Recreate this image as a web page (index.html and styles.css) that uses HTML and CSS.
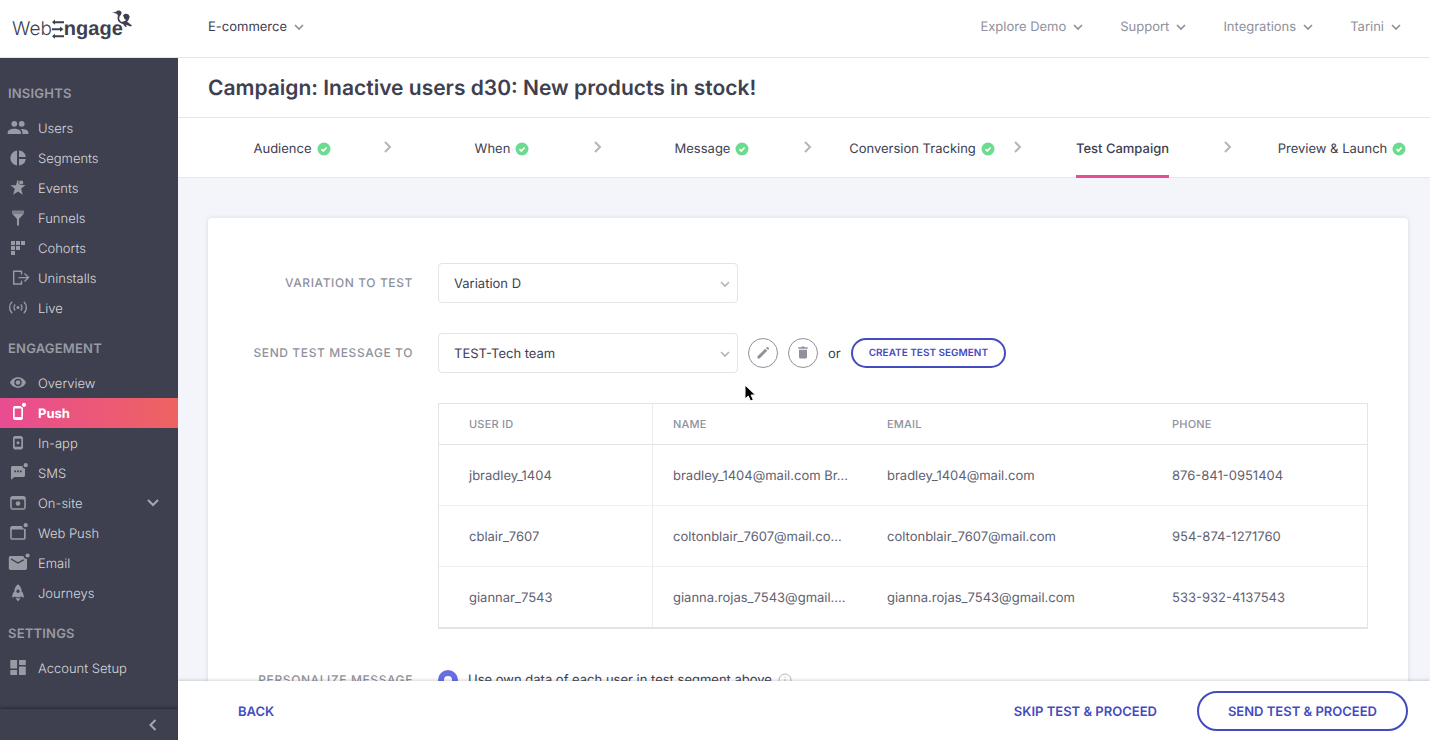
FILE: index.html
```html
<!DOCTYPE html>
<html lang="en">
<head>
<meta charset="utf-8">
<title>WebEngage – Test Campaign</title>
<meta name="viewport" content="width=device-width, initial-scale=1">
<link rel="stylesheet" href="styles.css">
</head>
<body>
<svg class="defs" aria-hidden="true">
  <symbol id="chev-down" viewBox="0 0 12 12"><path d="M2 4l4 4 4-4" fill="none" stroke="currentColor" stroke-width="1.7"/></symbol>
  <symbol id="chev-right" viewBox="0 0 12 14"><path d="M3 2l5 5-5 5" fill="none" stroke="currentColor" stroke-width="2"/></symbol>
  <symbol id="check" viewBox="0 0 14 14"><circle cx="7" cy="7" r="6.5" fill="#6bdc8f"/><path d="M4.500 7.200l1.800 1.800 3.300-3.500" fill="none" stroke="#fff" stroke-width="1.700"/></symbol>
</svg>
<div class="app">
  <header class="topbar">
    <a class="logo" href="#" aria-label="WebEngage">
      <span class="logo-light">Web</span>
      <svg class="logo-e" viewBox="0 0 12 20" fill="#3e404f" aria-hidden="true"><path d="M3 2.200h9v2H3v1.600L0 3.200 3 .6zM0 9.200h8V7.600l3.500 2.600L8 12.800v-1.600H0zM3 16.200h9v2H3v1.500l-3-2.500 3-2.500z"/></svg>
      <span class="logo-bold">ngage</span>
      <svg class="logo-bird" viewBox="0 0 20 18" fill="#3e404f" aria-hidden="true"><path d="M0 2.400L4.200 1.700C5.200 0 8.200-.1 9.300 1.900c.5 1 .2 1.900-.3 2.700l-1 .8-2 .3C5.600 4.200 4.500 3.100 0 2.400z"/><path d="M8.200 4.200C5.800 6.800 5.600 10 8.200 11.900c2 1.500 4 1.300 5.400-.2 1.800-1.500 3.400-3 3-5.700" fill="none" stroke="#3e404f" stroke-width="1.700"/><path d="M11 5.200c1-1.700 4-2.200 5.500-.6 1 1.300.9 2.700.2 3.900-1.200 1.600-3.300 1.500-4.200.6z"/><path d="M9.500 12l4.500-1.300 6 4.800-1.400 1-4.600-1.800.8 2.300-1.700-.3z"/></svg>
    </a>
    <nav class="topnav">
      <button class="menu menu-dark" type="button">E-commerce <svg class="i12"><use href="#chev-down"/></svg></button>
      <span class="grow"></span>
      <button class="menu" type="button">Explore Demo <svg class="i12"><use href="#chev-down"/></svg></button>
      <button class="menu" type="button">Support <svg class="i12"><use href="#chev-down"/></svg></button>
      <button class="menu" type="button">Integrations <svg class="i12"><use href="#chev-down"/></svg></button>
      <button class="menu" type="button">Tarini <svg class="i12"><use href="#chev-down"/></svg></button>
    </nav>
  </header>

  <aside class="sidebar">
    <nav class="side-scroll">
      <h2 class="side-title">Insights</h2>
      <a class="side-link" href="#"><svg class="ico" viewBox="0 0 22 18"><circle cx="7.300" cy="4.800" r="2.900"/><circle cx="14.700" cy="4.800" r="2.900"/><path d="M.7 15v-1.700c0-2.300 3.400-3.500 6.600-3.500s6.600 1.200 6.600 3.500V15zM15.400 15v-1.700c0-1.300-.7-2.400-1.800-3.300 3.200-.3 7.800.9 7.800 3.300V15z"/></svg>Users</a>
      <a class="side-link" href="#"><svg class="ico" viewBox="0 0 22 18"><path d="M10 1.500v14.900a7.500 7.500 0 0 1 0-14.900zM12 1.500a7.500 7.500 0 0 1 6.800 6.500H12zM12 10h6.800a7.500 7.500 0 0 1-6.800 6.400z"/></svg>Segments</a>
      <a class="side-link" href="#"><svg class="ico" viewBox="0 0 22 18"><path d="M9 6.200L10.300 1.300l1.200.3c-.7 3 .7 4.300 2.400 4.400h4.600l-4.400 3.800 1.700 5.900-4.800-3.300-4.800 3.300 1.600-5.900L3.500 6.200z"/><circle cx="14.200" cy="3.500" r="2.100"/></svg>Events</a>
      <a class="side-link" href="#"><svg class="ico" viewBox="0 0 22 18"><path opacity=".7" d="M5 1.500h12v3H5z"/><path d="M5 4.500h12l-5 5.500v6.500h-2V10z"/></svg>Funnels</a>
      <a class="side-link" href="#"><svg class="ico" viewBox="0 0 22 18"><path d="M4 2h4v4H4zM9 2h4v4H9zM14 2h4v4h-4zM4 7h4v4H4zM9 7h4v4H9zM4 12h4v4H4z"/></svg>Cohorts</a>
      <a class="side-link" href="#"><svg class="ico" viewBox="0 0 22 18"><path class="line" d="M14.500 5.500V2.200H6.700v12.800h7.800v-3.300M11.500 8.600H21M17.500 4.600l4 4-4 4"/></svg>Uninstalls</a>
      <a class="side-link" href="#"><svg class="ico" viewBox="0 0 22 18"><circle cx="11" cy="8.500" r="1.500"/><path class="line" d="M8.200 5.600a4.200 4.200 0 0 0 0 5.800M13.800 5.600a4.200 4.200 0 0 1 0 5.800M5.200 2.700C1.800 5.500 1.800 11.500 5.200 14.300M16.800 2.700c3.400 2.800 3.400 8.800 0 11.600"/></svg>Live</a>

      <h2 class="side-title">Engagement</h2>
      <a class="side-link" href="#"><svg class="ico" viewBox="0 0 22 18"><path fill-rule="evenodd" d="M11 3.200c4 0 6.800 2.500 8 5.300-1.200 2.800-4 5.300-8 5.300S4.200 11.300 3 8.500C4.200 5.700 7 3.200 11 3.200zm0 1.600a3.700 3.700 0 1 0 0 7.400 3.700 3.700 0 0 0 0-7.400z"/><circle cx="11" cy="8.500" r="2.300"/></svg>Overview</a>
      <a class="side-link active" href="#" aria-current="page"><svg class="ico" viewBox="0 0 22 18"><path fill-rule="evenodd" d="M7 2h6.500l2.500 1.800v10.700L14.800 16H7.200L6 14.500v-11zM7.700 4.500v8.500h6.600V4.500z"/><circle cx="17" cy=".8" r="2.100"/></svg>Push</a>
      <a class="side-link" href="#"><svg class="ico" viewBox="0 0 22 18"><path fill-rule="evenodd" d="M7.500 2h7l1.500 1.500v10.600l-1.500 1.400h-7L6 14.100V3.500zM7.700 4.700v8.100h6.600V4.700z"/><circle cx="11" cy="8.700" r="1.500"/></svg>In-app</a>
      <a class="side-link" href="#"><svg class="ico" viewBox="0 0 22 18"><path fill-rule="evenodd" d="M5 2h10.300a3 3 0 0 0 2.700 2.700v7.300l-1 1H7.500L4 15.800V3zM7.300 6.500v1.800h1.800V6.500zm2.800 0v1.800h1.800V6.500zm2.800 0v1.800h1.800V6.500z"/><circle cx="18.700" cy="1.200" r="2.100"/></svg>SMS</a>
      <a class="side-link" href="#"><svg class="ico" viewBox="0 0 22 18"><path fill-rule="evenodd" d="M5 2h12l1.800 1.600v10.500l-1.500 1.700H4.700l-1.500-1.700V3.600zM4.800 5.500v8.700h12.400V5.500z"/><circle cx="11" cy="9.500" r="2.300"/></svg>On-site<svg class="side-caret" viewBox="0 0 14 14"><path class="line2" d="M2 4l5 5 5-5"/></svg></a>
      <a class="side-link" href="#"><svg class="ico" viewBox="0 0 22 18"><path fill-rule="evenodd" d="M4.500 2H15a3 3 0 0 0 3.700 2.900v9.700l-1.200 1.200H4.500l-1.300-1.200v-11zM4.800 5.500v8.700H17V5.500z"/><circle cx="18.700" cy="1.200" r="2.100"/></svg>Web Push</a>
      <a class="side-link" href="#"><svg class="ico" viewBox="0 0 22 18"><path fill-rule="evenodd" d="M3 2h13.500c.2 1.700 1.500 3 3.500 2.900v9.900L18.700 16H3l-1.200-1.200V3.200zM4 4.300v1.400l7 4.100 6.300-3.600-1.100-1L11 8.200z"/><circle cx="20.600" cy="1.500" r="2.100"/></svg>Email</a>
      <a class="side-link" href="#"><svg class="ico" viewBox="0 0 22 18"><path fill-rule="evenodd" d="M11 .2c2.700 2 3.700 4.500 3.700 7.500 1.400 1 2.100 2.500 2.100 6l-2.800-1.200-1 .8H9l-1-.8-2.800 1.200c0-3.500.7-5 2.100-6 0-3 1-5.500 3.700-7.500zm0 5.300a1.700 1.700 0 1 0 0 3.400 1.700 1.700 0 0 0 0-3.400z"/><path d="M8.500 14.300h5L11 17.500z"/></svg>Journeys</a>

      <h2 class="side-title">Settings</h2>
      <a class="side-link" href="#"><svg class="ico" viewBox="0 0 22 18"><rect x="3.300" y="1" width="6.800" height="8.500" rx=".5"/><rect x="12" y="1" width="6.800" height="5" rx=".5"/><rect x="3.300" y="11" width="6.800" height="5" rx=".5"/><rect x="12" y="7.500" width="6.800" height="8.500" rx=".5"/></svg>Account Setup</a>
    </nav>
    <button class="collapse" type="button" aria-label="Collapse sidebar"><svg viewBox="0 0 12 14"><path class="line2" d="M8.500 2l-5 5 5 5"/></svg></button>
  </aside>

  <main class="main">
    <h1 class="page-title">Campaign: Inactive users d30: New products in stock!</h1>
    <nav class="steps" aria-label="Campaign steps">
      <a class="step" href="#"><span class="step-name">Audience</span><svg class="status"><use href="#check"/></svg></a>
      <svg class="sep"><use href="#chev-right"/></svg>
      <a class="step" href="#"><span class="step-name">When</span><svg class="status"><use href="#check"/></svg></a>
      <svg class="sep"><use href="#chev-right"/></svg>
      <a class="step" href="#"><span class="step-name">Message</span><svg class="status"><use href="#check"/></svg></a>
      <svg class="sep"><use href="#chev-right"/></svg>
      <a class="step" href="#"><span class="step-name">Conversion Tracking</span><svg class="status"><use href="#check"/></svg></a>
      <svg class="sep"><use href="#chev-right"/></svg>
      <a class="step current" href="#" aria-current="step"><span class="step-name">Test Campaign</span><svg class="status"></svg></a>
      <svg class="sep"><use href="#chev-right"/></svg>
      <a class="step" href="#"><span class="step-name">Preview &amp; Launch</span><svg class="status"><use href="#check"/></svg></a>
    </nav>

    <div class="content">
      <form class="card" id="test-form">
        <label class="field-label" for="variation">Variation to test</label>
        <div class="field">
          <span class="select"><select id="variation"><option>Variation D</option></select><svg class="i12"><use href="#chev-down"/></svg></span>
        </div>

        <label class="field-label" for="segment">Send test message to</label>
        <div class="field">
          <span class="select"><select id="segment"><option>TEST-Tech team</option></select><svg class="i12"><use href="#chev-down"/></svg></span>
          <button class="round" type="button" aria-label="Edit segment"><svg viewBox="0 0 14 14"><path d="M1.500 10.300l7.700-7.600 2.100 2.100-7.700 7.700H1.500zM10 2l.9-.9h1l1 1v1l-.8.900z"/></svg></button>
          <button class="round" type="button" aria-label="Delete segment"><svg viewBox="0 0 14 14"><path d="M2.300 1.300h3l.7-.7h2l.7.700h3v1.500H2.300zM3 3.800h8v7.600l-1 1H4l-1-1z"/></svg></button>
          <span class="or">or</span>
          <button class="create" type="button">Create test segment</button>
        </div>

        <table class="users">
          <thead><tr><th class="c-id">User ID</th><th class="c-name">Name</th><th class="c-mail">Email</th><th>Phone</th></tr></thead>
          <tbody>
            <tr><td>jbradley_1404</td><td>bradley_1404@mail.com Br…</td><td>bradley_1404@mail.com</td><td>876-841-0951404</td></tr>
            <tr><td>cblair_7607</td><td>coltonblair_7607@mail.co…</td><td>coltonblair_7607@mail.com</td><td>954-874-1271760</td></tr>
            <tr><td>giannar_7543</td><td>gianna.rojas_7543@gmail.…</td><td>gianna.rojas_7543@gmail.com</td><td>533-932-4137543</td></tr>
          </tbody>
        </table>

        <span class="field-label personalize">Personalize message</span>
        <div class="field personalize">
          <input class="radio" type="radio" id="own" name="personalize" checked>
          <label for="own">Use own data of each user in test segment above</label>
          <svg class="info" viewBox="0 0 14 14"><circle cx="7" cy="7" r="6"/><path d="M7 6v4.500M7 3.500v1.200"/></svg>
        </div>
      </form>
    </div>

    <footer class="actions">
      <button class="text-btn" type="button">Back</button>
      <span class="grow"></span>
      <button class="text-btn" type="button">Skip test &amp; proceed</button>
      <button class="primary" type="submit" form="test-form">Send test &amp; proceed</button>
    </footer>
  </main>
</div>
<svg class="cursor" viewBox="0 0 12 18" aria-hidden="true"><path d="M1 1v14l3.300-3L6.500 17l2.800-1.200-2.200-4.800H11.500z" fill="#000" stroke="#fff" stroke-width="1"/></svg>
</body>
</html>
```
FILE: styles.css
```css
* { box-sizing: border-box; }

body {
  margin: 0;
  font-family: Inter, "Liberation Sans", sans-serif;
  font-size: 13px;
  line-height: 20px;
  text-rendering: geometricPrecision;
  color: #3e404f;
  background: #f4f5fa;
}

button, select, input { font: inherit; color: inherit; margin: 0; text-rendering: inherit; }
button { border: 0; background: none; padding: 0; cursor: pointer; white-space: nowrap; }
a { color: inherit; text-decoration: none; }
.defs { display: none; }
.grow { flex: 1; }
.i12 { width: 12px; height: 12px; flex: none; }

.app {
  display: grid;
  grid-template: auto minmax(0, 1fr) / 178px minmax(0, 1fr);
  height: 100vh;
}

/* Top bar */
.topbar {
  grid-column: 1 / -1;
  display: flex;
  align-items: center;
  min-height: 58px;
  padding-right: 28px;
  background: #fff;
  border-bottom: 1px solid #e6e6e8;
  position: relative;
  z-index: 2;
}
.logo {
  display: flex;
  align-items: center;
  width: 208px;
  padding-left: 12px;
  font-size: 20px;
  line-height: 28px;
  position: relative;
}
.logo-light { font-size: 19px; font-weight: 300; }
.logo-bold { font-family: "Liberation Sans", sans-serif; font-weight: 700; }
.logo-e { width: 12px; height: 20px; }
.logo-bird { position: absolute; left: 112px; top: -5px; width: 20px; height: 18px; }
.topnav { flex: 1; display: flex; align-items: center; gap: 36px; padding-bottom: 4px; }
.menu { display: flex; align-items: center; gap: 6px; color: #8f919c; }
.menu-dark { color: #3e404f; }
.menu svg { color: #8f919c; }

/* Sidebar */
.sidebar { display: flex; flex-direction: column; background: #3e404f; min-height: 0; }
.side-scroll { flex: 1; min-height: 0; overflow: hidden; padding-top: 10px; }
.side-title {
  margin: 0;
  padding: 16px 8px 9px;
  font-size: 13px;
  line-height: 20px;
  font-weight: 600;
  letter-spacing: 0.2px;
  text-transform: uppercase;
  color: #989aa4;
}
.side-link {
  display: flex;
  align-items: center;
  height: 30px;
  padding: 2px 18px 0 7px;
  font-weight: 300;
  color: #d6d7dc;
}
.ico { width: 22px; height: 18px; margin: 0 9px 2px 0; fill: #989aa4; flex: none; overflow: visible; }
.line { fill: none; stroke: #989aa4; stroke-width: 1.4; }
.line2 { fill: none; stroke: #a5a7b0; stroke-width: 2; }
.side-caret { width: 14px; height: 14px; margin: 0 0 2px auto; }
.active { font-weight: 700; color: #fff; background: linear-gradient(90deg, #e84c93, #ee6360); }
.active .ico { fill: #fff; }
.collapse {
  display: flex;
  align-items: center;
  justify-content: flex-end;
  height: 31px;
  padding-right: 19px;
  box-shadow: 0 -1px 3px rgba(20, 20, 30, 0.6);
}
.collapse svg { width: 12px; height: 14px; }

/* Main column */
.main { display: flex; flex-direction: column; min-height: 0; }
.page-title {
  margin: 0;
  padding: 16px 30px 13px;
  font-size: 21px;
  line-height: 30px;
  font-weight: 600;
  background: #fff;
  border-bottom: 1px solid #e6e6e8;
}
.steps {
  display: flex;
  align-items: stretch;
  height: 60px;
  flex: none;
  padding: 0 4px 0 30px;
  background: #fff;
  border-bottom: 1px solid #e6e7ee;
}
.step { flex: 1; display: flex; justify-content: center; align-items: center; gap: 5px; white-space: nowrap; }
.step-name { display: flex; align-items: center; height: 60px; padding-top: 5px; border-bottom: 3px solid transparent; }
.current .step-name { font-weight: 500; border-bottom-color: #e84c93; }
.status { width: 14px; height: 14px; margin-top: 2px; flex: none; }
.sep { width: 12px; height: 14px; margin: 22px 24px 0 6px; color: #b3b5bd; flex: none; }

.content { flex: 1; min-height: 0; overflow: hidden; padding: 40px 22px 0 30px; }
.card {
  display: grid;
  grid-template-columns: 205px minmax(0, 1fr);
  gap: 30px 25px;
  padding: 45px 40px 40px 0;
  background: #fff;
  border-radius: 4px;
  box-shadow: 0 0 4px rgba(62, 64, 79, 0.16);
}
.field-label {
  align-self: center;
  text-align: right;
  font-size: 12px;
  font-weight: 500;
  letter-spacing: 0.6px;
  text-transform: uppercase;
  color: #8f919c;
}
.field { display: flex; align-items: center; gap: 10px; }
.select { position: relative; width: 300px; }
.select select {
  appearance: none;
  display: block;
  width: 100%;
  height: 40px;
  padding: 2px 30px 0 15px;
  border: 1px solid #e4e4e8;
  border-radius: 4px;
  background: #fff;
}
.select svg { position: absolute; right: 7px; top: 15px; color: #b3b5bd; }
.round {
  display: grid;
  place-items: center;
  width: 30px;
  height: 30px;
  border: 1px solid #8f919c;
  border-radius: 50%;
}
.round svg { width: 14px; height: 14px; fill: #8f919c; }
.or { padding-top: 2px; }
.create {
  height: 30px;
  padding: 0 16px;
  border: 2px solid #444abf;
  border-radius: 15px;
  font-size: 10px;
  font-weight: 600;
  text-transform: uppercase;
  color: #444abf;
}

.users {
  grid-column: 2;
  width: 100%;
  table-layout: fixed;
  border-collapse: separate;
  border-spacing: 0;
  border: 1px solid #e4e4e8;
  border-bottom-width: 2px;
}
.users th, .users td { padding: 21px 20px 19px; text-align: left; border-bottom: 1px solid #f0f0f2; white-space: nowrap; overflow: hidden; }
.users th { padding: 10px 20px; font-size: 11px; font-weight: 500; letter-spacing: 0.2px; text-transform: uppercase; color: #8f919c; border-bottom-color: #e4e4e8; }
.users td { color: #5f6170; }
.users th:first-child, .users td:first-child { padding-left: 30px; border-right: 1px solid #ececef; }
.users tr:last-child td { border-bottom: 0; }
.c-id, .c-name { width: 214px; }
.c-mail { width: 285px; }

.personalize { margin-top: 11px; }
.field.personalize { gap: 6px; }
.radio { appearance: none; width: 20px; height: 20px; margin-right: 4px; border: 6px solid #666fe3; border-radius: 50%; background: #fff; }
.info { width: 14px; height: 14px; fill: none; stroke: #b3b5bd; }

.actions {
  display: flex;
  align-items: center;
  gap: 40px;
  padding: 10px 22px 9px 60px;
  background: #fff;
  box-shadow: 0 -1px 3px rgba(40, 40, 50, 0.2);
  position: relative;
}
.text-btn, .primary { padding-top: 2px; font-weight: 600; text-transform: uppercase; color: #444abf; }
.primary { height: 40px; padding: 2px 29px 0; border: 2px solid #444abf; border-radius: 20px; }

.cursor { position: absolute; left: 744px; top: 384px; width: 12px; height: 18px; }
```
